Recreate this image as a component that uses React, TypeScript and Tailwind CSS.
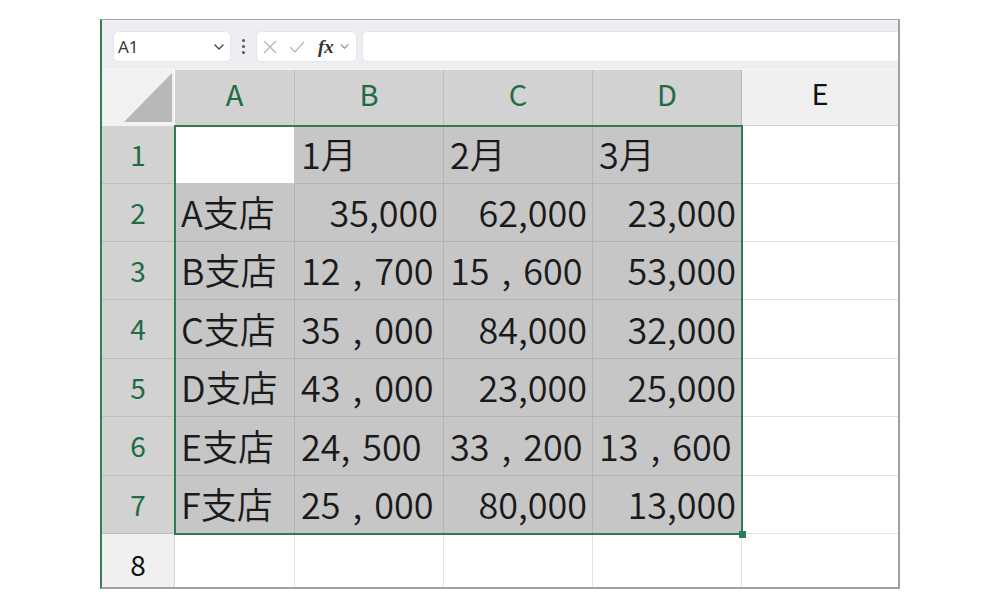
import React from "react";

type Cell = { t: string; r?: boolean };

const colNames = ["A", "B", "C", "D"];
const colWidths = ["w-[120px]", "w-[149px]", "w-[149px]", "w-[149px]"];
const rowHeights = ["h-[58px]", "h-[58px]", "h-[58px]", "h-[59px]", "h-[58px]", "h-[59px]", "h-[58px]"];

const data: Cell[][] = [
  [{ t: "" }, { t: "1月" }, { t: "2月" }, { t: "3月" }],
  [{ t: "A支店" }, { t: "35,000", r: true }, { t: "62,000", r: true }, { t: "23,000", r: true }],
  [{ t: "B支店" }, { t: "12 , 700" }, { t: "15 , 600" }, { t: "53,000", r: true }],
  [{ t: "C支店" }, { t: "35 , 000" }, { t: "84,000", r: true }, { t: "32,000", r: true }],
  [{ t: "D支店" }, { t: "43 , 000" }, { t: "23,000", r: true }, { t: "25,000", r: true }],
  [{ t: "E支店" }, { t: "24, 500" }, { t: "33 , 200" }, { t: "13 , 600" }],
  [{ t: "F支店" }, { t: "25 , 000" }, { t: "80,000", r: true }, { t: "13,000", r: true }],
];

const font = { fontFamily: '"Noto Sans CJK JP", "Noto Sans", sans-serif' };

function Chevron({ className }: { className: string }) {
  return (
    <svg viewBox="0 0 12 8" className={className} fill="none" stroke="currentColor" strokeWidth="1.4" strokeLinecap="round" strokeLinejoin="round">
      <path d="M2 2 L6 6 L10 2" />
    </svg>
  );
}

function FormulaBar() {
  return (
    <div className="h-[50px] bg-[#eceef1] flex items-start pt-[11px] pl-[11px] border-b border-[#f4f5f7] shrink-0">
      {/* name box */}
      <div className="w-[118px] h-[31px] bg-white rounded-[5px] border border-[#e3e5e8] flex items-center pl-[4px] pr-[5px]">
        <span className="text-[17px] text-[#3a3a3a] flex-1" style={{ fontFamily: '"Noto Sans", sans-serif' }}>A1</span>
        <Chevron className="w-[12px] h-[8px] text-[#444]" />
      </div>
      {/* grip dots */}
      <div className="w-[25px] h-[31px] flex flex-col items-center justify-center gap-[3px]">
        <span className="w-[3px] h-[3px] rounded-full bg-[#555]" />
        <span className="w-[3px] h-[3px] rounded-full bg-[#555]" />
        <span className="w-[3px] h-[3px] rounded-full bg-[#555]" />
      </div>
      {/* cancel / enter / function */}
      <div className="w-[101px] h-[31px] bg-white rounded-[5px] border border-[#e3e5e8] flex items-center pl-[6px]">
        <svg viewBox="0 0 14 14" className="w-[14px] h-[14px] text-[#b4b4b4]" fill="none" stroke="currentColor" strokeWidth="1.2">
          <path d="M1 1 L13 13 M13 1 L1 13" />
        </svg>
        <svg viewBox="0 0 16 12" className="w-[16px] h-[12px] ml-[12px] text-[#b4b4b4]" fill="none" stroke="currentColor" strokeWidth="1.2">
          <path d="M1 6 L6 11 L15 1" />
        </svg>
        <span className="ml-[13px] text-[19px] italic font-bold text-[#333] leading-none" style={{ fontFamily: '"Liberation Serif", serif' }}>
          fx
        </span>
        <Chevron className="ml-[5px] w-[11px] h-[7px] text-[#9a9a9a]" />
      </div>
      {/* formula input */}
      <div className="ml-[5px] flex-1 h-[31px] bg-white rounded-l-[5px] border border-r-0 border-[#e3e5e8]" />
    </div>
  );
}

export default function App() {
  return (
    <div className="w-[1000px] h-[609px] bg-white pt-[19px] pl-[100px]" style={font}>
      <div className="w-[800px] h-[570px] border-t border-r-2 border-b-2 border-l-2 border-t-[#a5a5a5] border-r-[#a0a0a0] border-b-[#a0a0a0] border-l-[#3f7a55] flex flex-col overflow-hidden">
        <FormulaBar />

        <div className="relative flex-1 flex flex-col">
          {/* column headers */}
          <div className="flex h-[56px] shrink-0">
            <div className="w-[73px] h-full bg-[#f1f1f1] border-r border-white relative">
              <svg viewBox="0 0 73 56" className="absolute inset-0 w-[73px] h-[56px]">
                <polygon points="22,52 70,52 70,3" fill="#b8b8b8" />
              </svg>
            </div>
            {colNames.map((c, i) => (
              <div
                key={c}
                className={`${colWidths[i]} h-full bg-[#d2d2d2] border-r border-[#bcbcbc] flex items-center justify-center pb-[9px] text-[29px] text-[#1f6b43]`}
              >
                {c}
              </div>
            ))}
            <div className="flex-1 h-full bg-[#efefef] border-b border-[#d0d0d0] flex items-center justify-center pb-[9px] text-[29px] text-[#111]">
              E
            </div>
          </div>

          {/* data rows */}
          {data.map((row, ri) => (
            <div key={ri} className={`flex ${rowHeights[ri]} shrink-0`}>
              <div className="w-[73px] h-full bg-[#d2d2d2] border-r border-b border-[#bdbdbd] flex items-center justify-center pb-[2px] text-[28px] text-[#1f6b43]">
                {ri + 1}
              </div>
              {row.map((cell, ci) => {
                const white = ri === 0 && ci === 0;
                return (
                  <div
                    key={ci}
                    className={`${colWidths[ci]} h-full border-r border-b flex items-center pb-[3px] text-[36px] font-[350] text-[#1a1a1a] whitespace-pre [word-spacing:4px] ${
                      white ? "bg-white border-[#c6c6c6]" : "bg-[#c6c6c6] border-[#b2b2b2]"
                    } ${cell.r ? "justify-end pr-[5px]" : "justify-start pl-[6px]"}`}
                  >
                    {cell.t}
                  </div>
                );
              })}
              <div className="flex-1 h-full bg-white border-b border-[#e1e1e1]" />
            </div>
          ))}

          {/* row 8 */}
          <div className="flex flex-1">
            <div className="w-[73px] h-full bg-[#f0f0f0] border-r border-[#d4d4d4] flex items-start justify-center pt-[9px] text-[28px] text-[#111]">
              8
            </div>
            {colWidths.map((w, i) => (
              <div key={i} className={`${w} h-full bg-white border-r border-[#e1e1e1]`} />
            ))}
            <div className="flex-1 h-full bg-white" />
          </div>

          {/* selection outline with fill handle */}
          <div className="absolute left-[72px] top-[55px] w-[569px] h-[410px] border-2 border-[#2f7a4e] pointer-events-none">
            <div className="absolute right-[-5px] bottom-[-5px] w-[7px] h-[7px] bg-[#2f7a4e]" />
          </div>
        </div>
      </div>
    </div>
  );
}
